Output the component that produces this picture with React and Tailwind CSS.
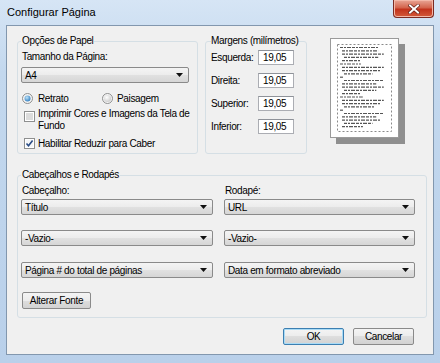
import React from 'react';

const font = { fontFamily: '"Liberation Sans", Arial, sans-serif' };

const Select = ({ value, className }) => (
  <div
    className={`h-[16px] flex items-center justify-between pl-[3px] pr-[5px] border border-[#8a8a8a] rounded-[2px] bg-[linear-gradient(#f4f4f4,#ececec_50%,#e1e1e1_50%,#d6d6d6)] ${className}`}
  >
    <span className="whitespace-nowrap">{value}</span>
    <svg width="7" height="4" viewBox="0 0 7 4">
      <path d="M0 0h7L3.5 4z" fill="#111" />
    </svg>
  </div>
);

const Radio = ({ checked }) => (
  <svg width="11" height="11" viewBox="0 0 11 11" className="shrink-0">
    <defs>
      <radialGradient id={checked ? 'rOn' : 'rOff'} cx="0.4" cy="0.35" r="0.7">
        <stop offset="0" stopColor={checked ? '#bfe3f7' : '#ffffff'} />
        <stop offset="1" stopColor={checked ? '#2c7bbf' : '#c9c9c9'} />
      </radialGradient>
    </defs>
    <circle cx="5.5" cy="5.5" r="5" fill="#f4f4f4" stroke="#8e8f8f" />
    {checked ? (
      <circle cx="5.5" cy="5.5" r="3" fill="url(#rOn)" />
    ) : (
      <circle cx="5.5" cy="5.5" r="3.6" fill="url(#rOff)" />
    )}
  </svg>
);

const Checkbox = ({ checked }) => (
  <svg width="11" height="11" viewBox="0 0 11 11" className="shrink-0">
    <rect x="0.5" y="0.5" width="10" height="10" fill="#fff" stroke="#8e8f8f" />
    <rect x="2" y="2" width="7" height="7" fill={checked ? '#f4f6f8' : '#dcdcdc'} />
    {checked && <path d="M2.5 5.5l2 2.2L8.6 2.6" fill="none" stroke="#2a4c85" strokeWidth="1.6" />}
  </svg>
);

const Button = ({ label, primary, className }) => (
  <div
    className={`h-[17px] flex items-center justify-center rounded-[2px] border bg-[linear-gradient(#f4f4f4,#ececec_50%,#dedede_50%,#d2d2d2)] ${
      primary ? 'border-[#3c7fb1] shadow-[inset_0_0_0_1px_#a9dbf6]' : 'border-[#8a8a8a]'
    } ${className}`}
  >
    {label}
  </div>
);

const MarginRow = ({ label }) => (
  <div className="h-[16px] flex items-center">
    <span className="w-[47px]">{label}</span>
    <div className="w-[36px] h-[15px] bg-white border border-[#abadb3] border-t-[#8e9299] flex items-center pl-[4px]">
      19,05
    </div>
  </div>
);

const lines = [
  [0, 40], [1, 38], [1, 44], [2, 36], [1, 20], [0, 22], [1, 44], [1, 40], [2, 30],
  [0, 4], [2, 42], [1, 36], [1, 44], [2, 34], [1, 20], [0, 24], [1, 44], [1, 40],
  [2, 32], [0, 4], [2, 42], [1, 36], [1, 40], [2, 30], [1, 22],
];

const Preview = () => (
  <div className="mt-[5px] ml-[23px] w-[69px] h-[100px] bg-white border border-[#9a9a9a] shadow-[6px_6px_0_#8f8f8f] shrink-0">
    <svg width="67" height="98" viewBox="0 0 67 98">
      <rect x="6.5" y="5.5" width="54" height="87" fill="none" stroke="#8a8a8a" strokeDasharray="2 2" />
      {lines.map(([indent, len], i) => (
        <line
          key={i}
          x1={9 + indent * 2}
          x2={9 + indent * 2 + len * 0.95}
          y1={8.5 + i * 3.3}
          y2={8.5 + i * 3.3}
          stroke="#555"
          strokeWidth="1.2"
          strokeDasharray="3 1 2 1 4 1"
        />
      ))}
    </svg>
  </div>
);

export default function App() {
  return (
    <div
      className="w-[440px] h-[363px] flex flex-col bg-[linear-gradient(#d6e5f5,#c3d8ee_20%,#b9d0ea)] text-[10px] tracking-[-0.35px] text-black overflow-hidden"
      style={font}
    >
      {/* title bar */}
      <div className="h-[25px] flex items-start justify-between shrink-0">
        <span className="pl-[7px] pt-[5px] text-[11px] leading-[14px] tracking-normal text-black">Configurar Página</span>
        <div className="mr-[6px] w-[41px] h-[18px] rounded-b-[4px] border border-t-0 border-[#7b2b22] bg-[linear-gradient(#e9a696,#d3644c_45%,#c2331c_55%,#d35a3a)] flex items-center justify-center shadow-[inset_0_0_0_1px_#f3b8a8]">
          <svg width="12" height="10" viewBox="0 0 12 10">
            <path d="M2 1.5l8 7M10 1.5l-8 7" stroke="#5a1a12" strokeWidth="3.2" strokeLinecap="square" />
            <path d="M2 1.5l8 7M10 1.5l-8 7" stroke="#fff" strokeWidth="2" strokeLinecap="square" />
          </svg>
        </div>
      </div>

      {/* client */}
      <div className="ml-[6px] w-[428px] h-[330px] bg-[#f0f0f0] border border-[#8297ae] shrink-0">
        <div className="flex pt-[7px] pl-[10px]">
          <fieldset className="w-[181px] h-[121px] border border-[#d5dfe5] rounded-[3px] pl-[3px] pr-[4px]">
            <legend className="px-[1px] leading-[16px]">Opções de Papel</legend>
            <div className="leading-[15px] pl-[1px]">Tamanho da Página:</div>
            <Select value="A4" className="mt-[3px] w-[168px]" />
            <div className="mt-[8px] h-[15px] flex items-center pl-[1px]">
              <Radio checked />
              <span className="ml-[5px] w-[64px]">Retrato</span>
              <Radio />
              <span className="ml-[4px]">Paisagem</span>
            </div>
            <div className="mt-[2px] flex items-start pl-[3px]">
              <div className="mt-[3px]">
                <Checkbox />
              </div>
              <span className="ml-[3px] leading-[12px] whitespace-nowrap">
                Imprimir Cores e Imagens da Tela de
                <br />
                Fundo
              </span>
            </div>
            <div className="mt-[4px] h-[14px] flex items-center pl-[3px]">
              <Checkbox checked />
              <span className="ml-[3px] whitespace-nowrap">Habilitar Reduzir para Caber</span>
            </div>
          </fieldset>

          <fieldset className="ml-[7px] w-[102px] h-[121px] border border-[#d5dfe5] rounded-[3px] pl-[5px]">
            <legend className="leading-[16px] whitespace-nowrap">Margens (milímetros)</legend>
            <div className="flex flex-col gap-[7px]">
              <MarginRow label="Esquerda:" />
              <MarginRow label="Direita:" />
              <MarginRow label="Superior:" />
              <MarginRow label="Inferior:" />
            </div>
          </fieldset>

          <Preview />
        </div>

        <fieldset className="mt-[13px] ml-[10px] w-[410px] h-[151px] border border-[#d5dfe5] rounded-[3px] pl-[3px]">
          <legend className="px-[1px] leading-[16px]">Cabeçalhos e Rodapés</legend>
          <div className="flex gap-[11px]">
            <div className="w-[192px] flex flex-col">
              <div className="leading-[15px] pl-[1px]">Cabeçalho:</div>
              <Select value="Título" className="mt-[1px]" />
              <Select value="-Vazio-" className="mt-[15px]" />
              <Select value="Página # do total de páginas" className="mt-[16px]" />
              <Button label="Alterar Fonte" className="mt-[14px] ml-[1px] w-[69px]" />
            </div>
            <div className="w-[191px] flex flex-col">
              <div className="leading-[15px] pl-[1px]">Rodapé:</div>
              <Select value="URL" className="mt-[1px]" />
              <Select value="-Vazio-" className="mt-[15px]" />
              <Select value="Data em formato abreviado" className="mt-[16px]" />
            </div>
          </div>
        </fieldset>

        <div className="mt-[10px] pr-[19px] flex justify-end gap-[9px]">
          <Button label="OK" primary className="w-[61px]" />
          <Button label="Cancelar" className="w-[61px]" />
        </div>
      </div>
    </div>
  );
}
